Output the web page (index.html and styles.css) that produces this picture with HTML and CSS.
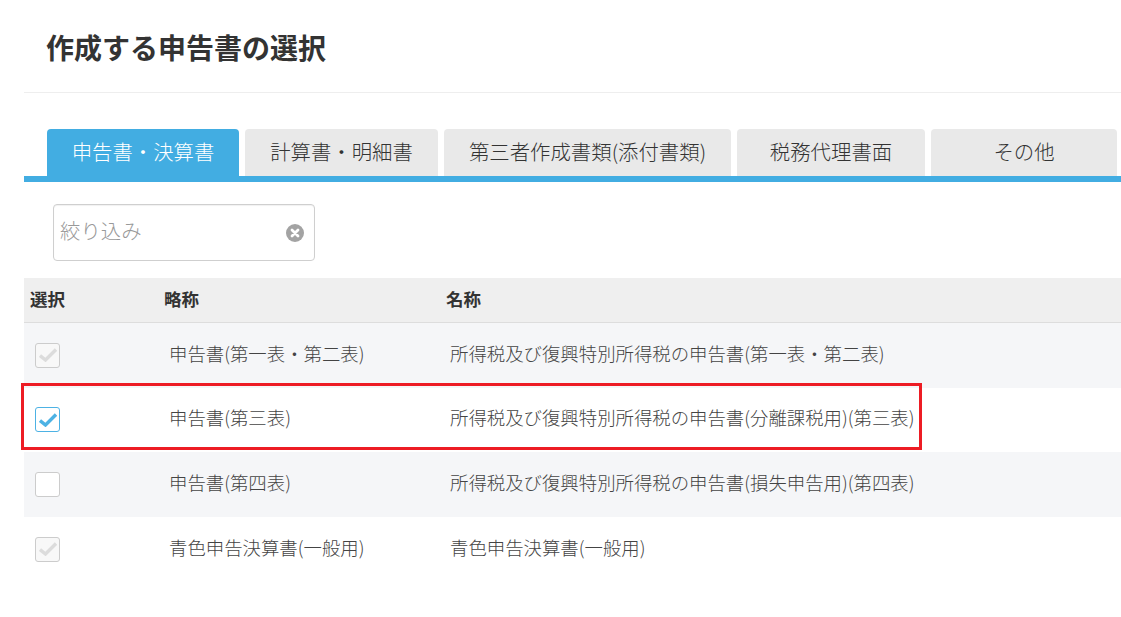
FILE: index.html
```html
<!DOCTYPE html>
<html lang="ja">
<head>
<meta charset="utf-8">
<title>作成する申告書の選択</title>
<link rel="stylesheet" href="styles.css">
</head>
<body>
<main class="page">
  <header class="head"><h1 class="title">作成する申告書の選択</h1></header>
  <nav class="tabs">
    <a class="tab tab-active tab-a">申告書・決算書</a>
    <a class="tab tab-b">計算書・明細書</a>
    <a class="tab tab-c">第三者作成書類(添付書類)</a>
    <a class="tab tab-d">税務代理書面</a>
    <a class="tab tab-e">その他</a>
  </nav>
  <div class="filter">
    <div class="search">
      <span class="placeholder">絞り込み</span>
      <svg class="clear" width="18" height="18" viewBox="0 0 18 18"><circle cx="9" cy="9" r="9" fill="#a3a3a3"/><path d="M6 6l6 6M12 6l-6 6" stroke="#fff" stroke-width="2.800" stroke-linecap="round"/></svg>
    </div>
  </div>
  <section class="list">
    <div class="row row-head"><span>選択</span><span>略称</span><span>名称</span></div>
    <div class="row row-alt">
      <span class="box box-off"><svg width="18" height="14" viewBox="0 0 18 14"><path d="M1 7.500l5.500 4.500 10.500-10.500" fill="none" stroke="#dcdcdc" stroke-width="3.400"/></svg></span>
      <span class="cell">申告書(第一表・第二表)</span>
      <span class="cell">所得税及び復興特別所得税の申告書(第一表・第二表)</span>
    </div>
    <div class="row row-picked">
      <span class="box box-on"><svg width="18" height="14" viewBox="0 0 18 14"><path d="M1 7.500l5.500 4.500 10.500-10.500" fill="none" stroke="#4db2e4" stroke-width="3.400"/></svg></span>
      <span class="cell">申告書(第三表)</span>
      <span class="cell">所得税及び復興特別所得税の申告書(分離課税用)(第三表)</span>
      <div class="marker"></div>
    </div>
    <div class="row row-alt">
      <span class="box"></span>
      <span class="cell">申告書(第四表)</span>
      <span class="cell">所得税及び復興特別所得税の申告書(損失申告用)(第四表)</span>
    </div>
    <div class="row">
      <span class="box box-off"><svg width="18" height="14" viewBox="0 0 18 14"><path d="M1 7.500l5.500 4.500 10.500-10.500" fill="none" stroke="#dcdcdc" stroke-width="3.400"/></svg></span>
      <span class="cell">青色申告決算書(一般用)</span>
      <span class="cell">青色申告決算書(一般用)</span>
    </div>
  </section>
</main>
</body>
</html>
```
FILE: styles.css
```css
* { box-sizing: border-box; }
html, body { margin: 0; background: #fff; }
body {
  font-family: "Noto Sans CJK JP", "Noto Sans", sans-serif;
  color: #444;
  overflow: hidden;
}
.page { padding-left: 24px; height: 617px; }
.head {
  height: 93px;
  border-bottom: 1px solid #eee;
  padding: 28px 0 0 22px;
}
.title {
  margin: 0;
  font-size: 28px;
  line-height: 38px;
  font-weight: 700;
  color: #333;
}
.tabs {
  display: flex;
  gap: 6px;
  margin-top: 36px;
  padding-left: 23px;
  height: 53px;
  border-bottom: 6px solid #42ade2;
}
.tab {
  height: 47px;
  background: #e9e9e9;
  border-radius: 4px 4px 0 0;
  font-size: 20.400px;
  font-weight: 300;
  line-height: 45px;
  text-align: center;
  color: #333;
  white-space: nowrap;
}
.tab-active { background: #42ade2; color: #fff; }
.tab-a { width: 192px; }
.tab-b { width: 193px; }
.tab-c { width: 287px; }
.tab-d { width: 188px; }
.tab-e { width: 186px; }
.filter { padding: 22px 0 17px 29px; }
.search {
  width: 262px;
  height: 57px;
  border: 1px solid #cfcfcf;
  border-radius: 4px;
  display: flex;
  align-items: center;
  justify-content: space-between;
  padding: 0 10px 0 6px;
  box-shadow: inset 0 1px 1px rgba(0,0,0,.06);
}
.placeholder { font-size: 20.400px; font-weight: 300; color: #999; line-height: 30px; margin-bottom: 6px; }
.row {
  display: grid;
  grid-template-columns: 145px 281px 1fr;
  align-items: center;
  height: 64.670px;
  position: relative;
  font-size: 18.400px;
  font-weight: 300;
  color: #444;
  white-space: nowrap;
}
.cell { padding-bottom: 5px; }
.row-head {
  height: 45px;
  background: #efefef;
  border-bottom: 1px solid #ddd;
  font-size: 17.500px;
  font-weight: 700;
  color: #333;
  padding-left: 6px;
  padding-bottom: 3px;
  grid-template-columns: 135px 281px 1fr;
}
.row-head span:nth-child(2) { margin-left: -1px; }
.row-alt { background: #f5f6f8; }
.box {
  width: 25px;
  height: 25px;
  margin-left: 11px;
  background: #fff;
  border: 1px solid #ccc;
  border-radius: 3px;
  display: flex;
  align-items: center;
  justify-content: center;
}
.box-off { background: #f8f8f8; }
.box-on { border-color: #4db2e4; }
.marker {
  position: absolute;
  left: -3px;
  top: -4.670px;
  width: 901px;
  height: 67px;
  border: 3px solid #ed1c24;
  pointer-events: none;
}
```
